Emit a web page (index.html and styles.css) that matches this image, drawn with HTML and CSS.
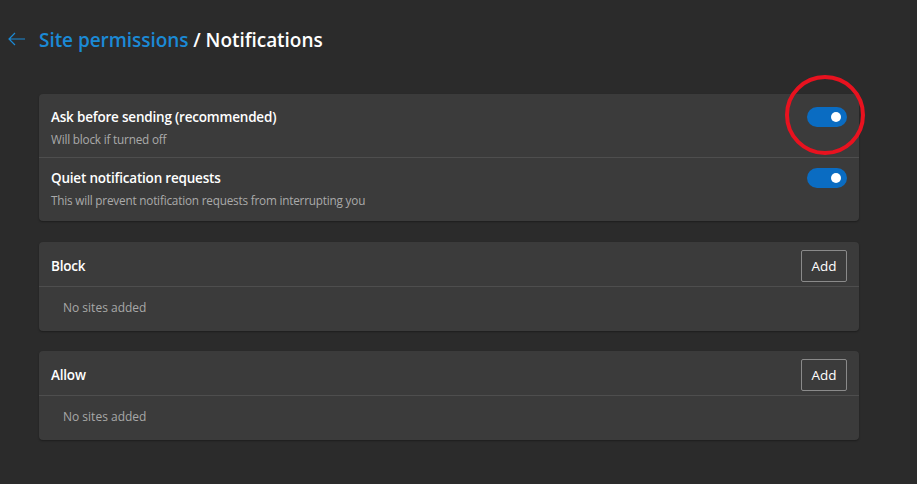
FILE: index.html
```html
<!DOCTYPE html>
<html>
<head>
<meta charset="utf-8">
<link rel="stylesheet" href="styles.css">
</head>
<body>
<div class="page">
  <header class="header">
    <svg class="back" width="18" height="14" viewBox="0 0 18 14"><path d="M7 1 L1 7 L7 13 M1 7 H17" fill="none" stroke="#1b8ad6" stroke-width="1.2"/></svg>
    <h1 class="title"><span class="crumb">Site permissions</span> / Notifications</h1>
  </header>
  <main class="content">
    <section class="card first">
      <div class="row top">
        <div class="text">
          <div class="label">Ask before sending (recommended)</div>
          <div class="desc">Will block if turned off</div>
        </div>
        <div class="toggle-wrap">
          <div class="toggle"><span class="knob"></span></div>
          <span class="ring"></span>
        </div>
      </div>
      <div class="row divided">
        <div class="text">
          <div class="label">Quiet notification requests</div>
          <div class="desc">This will prevent notification requests from interrupting you</div>
        </div>
        <div class="toggle-wrap">
          <div class="toggle"><span class="knob"></span></div>
        </div>
      </div>
    </section>
    <section class="card">
      <div class="list-head">
        <div class="label">Block</div>
        <button class="add">Add</button>
      </div>
      <div class="empty">No sites added</div>
    </section>
    <section class="card">
      <div class="list-head">
        <div class="label">Allow</div>
        <button class="add">Add</button>
      </div>
      <div class="empty">No sites added</div>
    </section>
  </main>
</div>
</body>
</html>
```
FILE: styles.css
```css
html, body {
  margin: 0;
  padding: 0;
  background: #2b2b2b;
  font-family: "Open Sans", "Noto Sans", sans-serif;
  color: #ffffff;
}
.page {
  width: 917px;
  height: 484px;
  overflow: hidden;
}
.header {
  display: flex;
  align-items: center;
  height: 40px;
  padding: 20px 0 0 8px;
}
.back {
  display: block;
  margin-right: 13px;
  margin-top: -2px;
}
.title {
  margin: 0;
  font-size: 19px;
  font-weight: 600;
  letter-spacing: -0.05px;
  color: #ffffff;
}
.crumb {
  color: #1b8ad6;
}
.content {
  display: flex;
  flex-direction: column;
  gap: 20px;
  width: 820px;
  margin: 34px 0 0 39px;
}
.card {
  background: #3b3b3b;
  border-radius: 4px;
  box-shadow: 0 1px 2px rgba(0,0,0,0.35);
}
.card.first {
  margin-bottom: 1px;
}
.row {
  display: flex;
  align-items: flex-start;
  justify-content: space-between;
  box-sizing: border-box;
  height: 63px;
  padding: 11px 12px 0 12px;
}
.row.top {
  padding-top: 14px;
}
.row.divided {
  border-top: 1px solid #4e4e4e;
  height: 64px;
}
.text {
  display: flex;
  flex-direction: column;
  gap: 5px;
}
.label {
  font-size: 13.5px;
  line-height: 18px;
  font-weight: 600;
  letter-spacing: -0.2px;
  color: #ffffff;
}
.desc {
  font-size: 11.75px;
  line-height: 16px;
  color: #aaaaaa;
  letter-spacing: -0.2px;
}
.toggle-wrap {
  position: relative;
  width: 40px;
  height: 20px;
  margin-top: -1px;
}
.toggle {
  width: 40px;
  height: 20px;
  border-radius: 10px;
  background: #0a6cc2;
  position: relative;
}
.knob {
  position: absolute;
  right: 6px;
  top: 5px;
  width: 10px;
  height: 10px;
  border-radius: 50%;
  background: #ffffff;
}
.ring {
  position: absolute;
  left: -22px;
  top: -32px;
  width: 72px;
  height: 72px;
  border: 4px solid #e8121f;
  border-radius: 50%;
}
.list-head {
  display: flex;
  align-items: center;
  justify-content: space-between;
  box-sizing: border-box;
  height: 45px;
  padding: 4px 12px 0 12px;
  border-bottom: 1px solid #4e4e4e;
}
.add {
  width: 46px;
  height: 32px;
  background: transparent;
  border: 1px solid #8a8a8a;
  border-radius: 2px;
  color: #ffffff;
  font-family: "Open Sans", "Noto Sans", sans-serif;
  font-size: 13.5px;
  padding: 0;
}
.empty {
  height: 44px;
  line-height: 42px;
  padding-left: 24px;
  font-size: 12px;
  color: #a8a8a8;
}
```
